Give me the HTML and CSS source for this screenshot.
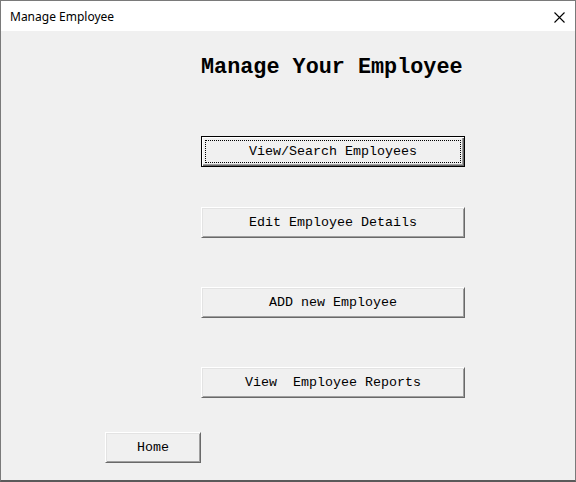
FILE: index.html
```html
<!DOCTYPE html>
<html>
<head>
<meta charset="utf-8">
<title>Manage Employee</title>
<link rel="stylesheet" href="styles.css">
</head>
<body>
<div class="window">
  <div class="titlebar">
    <span class="title">Manage Employee</span>
    <span class="close">
      <svg width="11" height="11" viewBox="0 0 11 11"><path d="M0.5 0.5 L10.5 10.5 M10.5 0.5 L0.5 10.5" stroke="#000" stroke-width="1.1" fill="none"/></svg>
    </span>
  </div>
  <div class="content">
    <div class="main">
      <h1 class="heading">Manage Your Employee</h1>
      <button class="btn btn-wide btn-default b1"><span class="focus">View/Search Employees</span></button>
      <button class="btn btn-wide b2">Edit Employee Details</button>
      <button class="btn btn-wide b3">ADD new Employee</button>
      <button class="btn btn-wide b4">View &nbsp;Employee Reports</button>
    </div>
    <button class="btn btn-home">Home</button>
  </div>
</div>
</body>
</html>
```

FILE: styles.css
```css
html, body {
  margin: 0;
  padding: 0;
}
body {
  width: 576px;
  height: 482px;
  overflow: hidden;
  background: #f0f0f0;
}
.window {
  width: 576px;
  height: 482px;
  box-sizing: border-box;
  border: 1px solid #7a7a7a;
  border-bottom: 2px solid #5a5a5a;
  background: #f0f0f0;
  display: flex;
  flex-direction: column;
}
.titlebar {
  height: 30px;
  flex: none;
  background: #ffffff;
  display: flex;
  align-items: center;
  justify-content: space-between;
  padding: 0 10px 0 9px;
}
.title {
  font-family: "Noto Sans", "Open Sans", sans-serif;
  font-size: 12px;
  line-height: 16px;
  color: #000;
  margin-top: 1px;
}
.close {
  display: flex;
  width: 11px;
  height: 11px;
  margin-top: 2px;
}
.content {
  flex: 1;
  display: flex;
  flex-direction: column;
  align-items: flex-start;
  padding-left: 104px;
}
.main {
  margin-left: 96px;
  display: flex;
  flex-direction: column;
  align-items: flex-start;
}
.heading {
  margin: 24px 0 0 0;
  font-family: "Liberation Mono", "Courier New", monospace;
  font-weight: bold;
  font-size: 21.8px;
  line-height: 26px;
  color: #000;
  letter-spacing: 0;
}
.btn {
  box-sizing: border-box;
  height: 31px;
  padding: 0;
  margin: 0;
  background: #f0f0f0;
  font-family: "Liberation Mono", "Courier New", monospace;
  font-size: 13.33px;
  color: #000;
  border: 1px solid;
  border-color: #ffffff #696969 #696969 #ffffff;
  box-shadow: inset 1px 1px #e3e3e3, inset -1px -1px #a0a0a0;
  display: flex;
  align-items: center;
  justify-content: center;
  white-space: pre;
}
.btn-wide {
  width: 264px;
}
.btn-default {
  border-color: #000;
  box-shadow: inset 1px 1px #ffffff, inset -1px -1px #696969, inset -2px -2px #a0a0a0;
  padding: 3px;
}
.focus {
  flex: 1;
  align-self: stretch;
  border: 1px dotted #000;
  display: flex;
  align-items: center;
  justify-content: center;
}
.b1 { margin-top: 55px; }
.b2 { margin-top: 40px; }
.b3 { margin-top: 49px; }
.b4 { margin-top: 49px; }
.btn-home {
  width: 96px;
  margin-top: 34px;
}
```
